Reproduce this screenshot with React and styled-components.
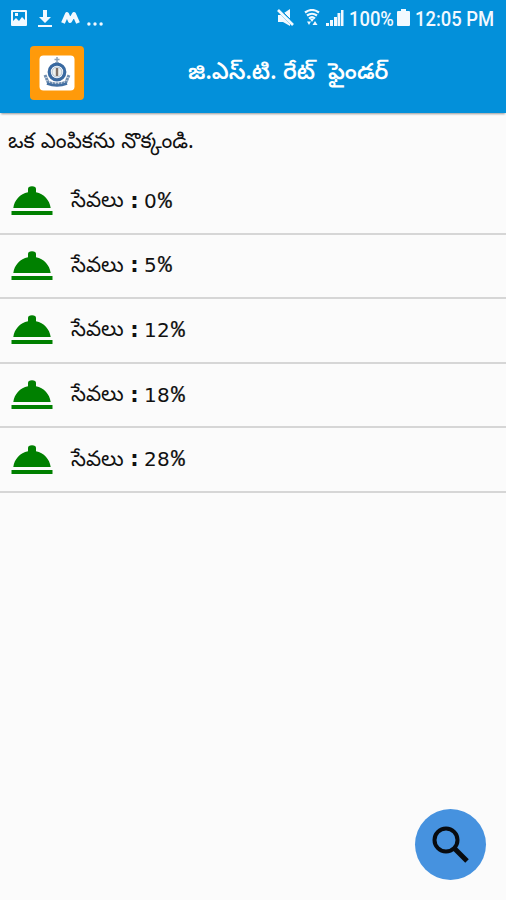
import React from 'react';
import styled, { createGlobalStyle } from 'styled-components';

const GlobalStyle = createGlobalStyle`
  body {
    margin: 0;
    background: #fbfbfb;
    color: #111;
    font-family: "Noto Sans Telugu", "Noto Sans", sans-serif;
  }
`;

const Screen = styled.div`
  height: 900px;
  display: flex;
  flex-direction: column;
  overflow: hidden;
`;

const StatusBar = styled.div`
  height: 36px;
  box-sizing: border-box;
  padding: 0 11px 0 10px;
  display: flex;
  align-items: center;
  justify-content: space-between;
  background: #0390da;
  color: #f2f9ff;
`;

const StatusText = styled.span`
  width: ${props => props.$width}px;
  margin-left: 5px;
  padding-top: 1px;
  font: 500 20px/36px Roboto, sans-serif;
  white-space: nowrap;
  transform: scaleX(0.92);
  transform-origin: left;
`;

const Group = styled.div`
  display: flex;
  align-items: center;
`;

const StatusIcon = styled.svg`
  display: block;
  fill: currentColor;
  margin-left: ${props => props.$left || 0}px;
`;

const Header = styled.header`
  height: 77px;
  box-sizing: border-box;
  padding: 10px 0 0 30px;
  display: flex;
  align-items: flex-start;
  background: #0390da;
  box-shadow: 0 2px 2px -1px rgba(0, 0, 0, 0.4);
`;

const Logo = styled.div`
  width: 54px;
  height: 54px;
  border-radius: 4px;
  display: flex;
  align-items: center;
  justify-content: center;
  background: #ff9a0a;
`;

const Title = styled.h1`
  margin: 12px 0 0 104px;
  font-size: 22.6px;
  line-height: 34px;
  font-weight: 600;
  color: #fff;
  white-space: pre;
`;

const Prompt = styled.p`
  margin: 0;
  height: 53px;
  padding: 4px 0 0 8px;
  font-size: 21.3px;
  line-height: 53px;
  white-space: nowrap;
`;

const List = styled.ul`
  margin: 0;
  padding: 0;
  list-style: none;
`;

const Row = styled.li`
  height: 64.6px;
  box-sizing: border-box;
  padding-left: 11px;
  display: flex;
  align-items: center;
  border-bottom: 2px solid #d6d6d6;
`;

const Label = styled.span`
  width: 54px;
  margin-left: 18px;
  padding-top: 4px;
  font-size: 21.3px;
  line-height: 30px;
  white-space: nowrap;
`;

const Colon = styled.span`
  width: 19px;
  text-align: center;
  font: bold 21px/30px "DejaVu Sans", sans-serif;
  padding-bottom: 1px;
`;

const Rate = styled.span`
  font: 20px/30px "DejaVu Sans", sans-serif;
  letter-spacing: 0.3px;
`;

/* narrow percent sign, as wide as one digit */
const Percent = styled.span`
  font: 23px/30px "Liberation Mono", monospace;
  letter-spacing: 0;
  margin-left: 1px;
  -webkit-text-stroke: 0.2px #111;
`;

const SearchButton = styled.button`
  width: 71px;
  height: 71px;
  margin: auto 20px 20px auto;
  padding: 0;
  border: 0;
  border-radius: 50%;
  display: flex;
  align-items: center;
  justify-content: center;
  background: #4692df;
`;

const rates = [0, 5, 12, 18, 28];

function Emblem() {
  return (
    <svg width="36" height="36" viewBox="0 0 36 36">
      <rect x="0.5" y="0.5" width="35" height="35" rx="4" fill="#fff" />
      <path d="M18 2v5M15.5 4.5h5M16 8h4" stroke="#8da2b8" strokeWidth="1.5" />
      <circle cx="18" cy="17" r="7.8" fill="#fff" stroke="#3969a0" strokeWidth="3.2" />
      <circle cx="18" cy="17" r="5" fill="#edf0ee" stroke="#9cb2cb" strokeWidth="0.8" />
      <path d="M18 13v8" stroke="#80736b" strokeWidth="2.4" />
      <path d="M6 20l3 7q9 4 18 0l3-7" fill="none" stroke="#708eb0" strokeWidth="3" strokeDasharray="2.6 0.5" />
      <path d="M8 28.5q10 4 20 0" fill="none" stroke="#426fa2" strokeWidth="2.6" />
    </svg>
  );
}

function Cloche() {
  return (
    <svg width="42" height="30" viewBox="0 0 42 30" fill="#008000">
      <path d="M2.3 22C3.5 14 9 8 17 6.3V3q0-2.8 4-2.8T25 3v3.3C33 8 38.5 14 39.7 22Z" />
      <rect x="0.5" y="25" width="41" height="4" />
    </svg>
  );
}

export default function App() {
  return (
    <Screen>
      <GlobalStyle />
      <StatusBar>
        <Group>
          <StatusIcon width="18" height="18" viewBox="0 0 18 18">
            <path fillRule="evenodd" d="M2 1h14q1 0 1 1v14q0 1-1 1H2q-1 0-1-1V2q0-1 1-1Zm1 2v9l3-3 3 3 3-4 3 3V3ZM5 4h3v3H5Z" />
          </StatusIcon>
          <StatusIcon $left={9} width="16" height="19" viewBox="0 0 16 19">
            <path d="M6 1h4v7h4l-6 6-6-6h4ZM1 16h14v2H1Z" />
          </StatusIcon>
          <StatusIcon $left={8} width="19" height="14" viewBox="0 0 19 14">
            <path d="M2 12L6 3l3 7 4-7 4 9" fill="none" stroke="currentColor" strokeWidth="4" strokeLinejoin="round" />
          </StatusIcon>
          <StatusIcon $left={7} width="16" height="18" viewBox="0 0 16 18">
            <circle cx="1.9" cy="15" r="1.7" />
            <circle cx="8" cy="15" r="1.7" />
            <circle cx="14.1" cy="15" r="1.7" />
          </StatusIcon>
        </Group>
        <Group>
          <StatusIcon width="18" height="18" viewBox="0 0 18 18">
            <path d="M1 6h3l9 9v2l-7-4H1ZM7 4l6-4v11Z" />
            <path d="M1 1l15 15" stroke="currentColor" strokeWidth="2.6" />
            <path d="M4 1l13 13" stroke="#0390da" strokeWidth="1" />
          </StatusIcon>
          <StatusIcon $left={9} width="16" height="18" viewBox="0 0 16 18">
            <path d="M1 3.5q7-5 14 0M3 6.5q5-3.5 10 0M5 9.5q3-2.5 6 0" fill="none" stroke="currentColor" strokeWidth="2.2" />
            <path d="M6 10h4l-2 3ZM3 12.5h4L5 16ZM11 12l2.5 4h-5Z" />
          </StatusIcon>
          <StatusIcon $left={5} width="19" height="18" viewBox="0 0 19 18">
            <path d="M1 14h3v3H1ZM5 11h3v6H5ZM9 8h3v9H9ZM12.5 4h2.8v13h-2.8ZM16 1h2.5v16H16Z" />
          </StatusIcon>
          <StatusText $width={46}>100%</StatusText>
          <StatusIcon $left={2} width="13" height="18" viewBox="0 0 13 18">
            <path d="M4 0h5v2h3q1 0 1 1v13q0 1-1 1H1q-1 0-1-1V3q0-1 1-1h3Z" />
          </StatusIcon>
          <StatusText $width={80}>12:05 PM</StatusText>
        </Group>
      </StatusBar>
      <Header>
        <Logo><Emblem /></Logo>
        <Title>{'జి.ఎస్.టి. రేట్  ఫైండర్'}</Title>
      </Header>
      <Prompt>ఒక ఎంపికను నొక్కండి.</Prompt>
      <List>
        {rates.map(rate => (
          <Row key={rate}>
            <Cloche />
            <Label>సేవలు</Label>
            <Colon>:</Colon>
            <Rate>{rate}<Percent>%</Percent></Rate>
          </Row>
        ))}
      </List>
      <SearchButton aria-label="Search">
        <svg width="40" height="40" viewBox="0 0 40 40" fill="none" stroke="#080b0f">
          <circle cx="15" cy="15" r="11.5" strokeWidth="4" />
          <path d="M23.5 23.5L36 36" strokeWidth="5" />
        </svg>
      </SearchButton>
    </Screen>
  );
}
